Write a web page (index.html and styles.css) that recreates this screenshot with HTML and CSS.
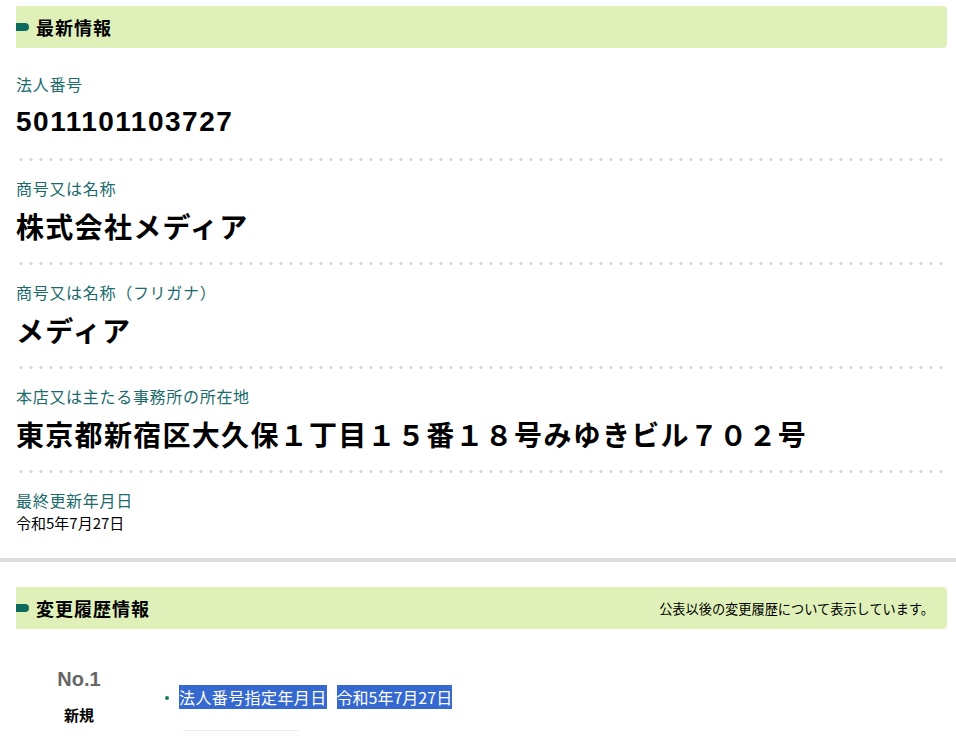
FILE: index.html
```html
<!DOCTYPE html>
<html lang="ja">
<head>
    <meta charset="UTF-8">
    <meta name="viewport" content="width=device-width, initial-scale=1.0">
    <title>法人番号公表サイト</title>
    <link rel="stylesheet" href="styles.css">
</head>
<body>
    <div class="section">
        <h2 class="bar"><span class="mark"></span>最新情報</h2>

        <dl class="fields">
            <div class="field">
                <dt>法人番号</dt>
                <dd class="big num">5011101103727</dd>
            </div>
            <div class="field">
                <dt>商号又は名称</dt>
                <dd class="big">株式会社メディア</dd>
            </div>
            <div class="field">
                <dt>商号又は名称（フリガナ）</dt>
                <dd class="big">メディア</dd>
            </div>
            <div class="field">
                <dt>本店又は主たる事務所の所在地</dt>
                <dd class="big">東京都新宿区大久保１丁目１５番１８号みゆきビル７０２号</dd>
            </div>
            <div class="field last">
                <dt>最終更新年月日</dt>
                <dd class="small">令和5年7月27日</dd>
            </div>
        </dl>
    </div>

    <hr class="rule">

    <div class="section">
        <h2 class="bar"><span class="mark"></span>変更履歴情報<span class="note">公表以後の変更履歴について表示しています。</span></h2>

        <div class="history">
            <div class="hist-no">
                <div class="no">No.1</div>
                <div class="kind">新規</div>
            </div>
            <ul class="hist-items">
                <li><span class="hl item-name">法人番号指定年月日</span><span class="gap"></span><span class="hl">令和5年7月27日</span></li>
            </ul>
        </div>
        <div class="more"></div>
    </div>
</body>
</html>
```

FILE: styles.css
```css
body {
    margin: 0;
    font-family: "Noto Sans CJK JP", "Liberation Sans", sans-serif;
    color: #000;
    background-color: #fff;
}
.section {
    margin: 0 9px 0 16px;
}
.bar {
    display: flex;
    align-items: center;
    height: 42px;
    margin: 6px 0 0;
    padding-right: 13px;
    background-color: #dff0b9;
    border-radius: 0 4px 4px 0;
    font-size: 18px;
    font-weight: bold;
    letter-spacing: 1px;
}
.mark {
    width: 13px;
    height: 8px;
    margin-right: 7px;
    background-color: #0d6a5e;
    border-radius: 0 4px 4px 0;
}
.note {
    margin-left: auto;
    font-size: 13.2px;
    font-weight: normal;
    letter-spacing: 0;
}
.fields {
    margin: 26px 0 0;
}
.field {
    padding-bottom: 21px;
    margin-bottom: 17px;
    background: radial-gradient(circle, #d6d6d6 1.4px, transparent 1.8px) 0 100% / 10px 3px repeat-x;
}
.field.last {
    background: none;
    padding-bottom: 0;
    margin-bottom: 0;
}
dt {
    color: #1b6b6b;
    font-size: 16px;
    letter-spacing: 0.7px;
    line-height: 20px;
}
dd {
    margin: 0;
}
.big {
    margin-top: 10px;
    font-size: 28px;
    font-weight: bold;
    letter-spacing: 1.3px;
    line-height: 36px;
}
.num {
    font-family: "Liberation Sans", "Noto Sans CJK JP", sans-serif;
    letter-spacing: 1.5px;
}
.small {
    margin-top: 3px;
    font-size: 15px;
    line-height: 20px;
}
.rule {
    margin: 25px 0 25px;
    height: 4px;
    border: none;
    background-color: #dcdcdc;
}
.section + .rule + .section .bar {
    margin-top: 0;
}
.history {
    display: flex;
    margin-top: 38px;
}
.hist-no {
    width: 126px;
    text-align: center;
    font-weight: bold;
}
.no {
    color: #666;
    font-family: "Liberation Sans", sans-serif;
    font-size: 20px;
    line-height: 24px;
}
.kind {
    margin-top: 13px;
    font-size: 15px;
    line-height: 22px;
}
.hist-items {
    margin: 19px 0 0;
    padding: 0 0 0 20px;
    list-style: none;
}
.hist-items li {
    position: relative;
    font-size: 16px;
    line-height: 22px;
    padding-left: 17px;
}
.hist-items li::before {
    content: "";
    position: absolute;
    left: 3px;
    top: 10px;
    width: 4px;
    height: 4px;
    border-radius: 50%;
    background-color: #11806a;
}
.hl {
    background-color: #3569cf;
    color: #fff;
}
.item-name {
    letter-spacing: 0.4px;
}
.gap {
    display: inline-block;
    width: 10px;
}
.more {
    width: 115px;
    margin: 4px 0 0 167px;
    border-top: 1px solid #ececec;
}
```
